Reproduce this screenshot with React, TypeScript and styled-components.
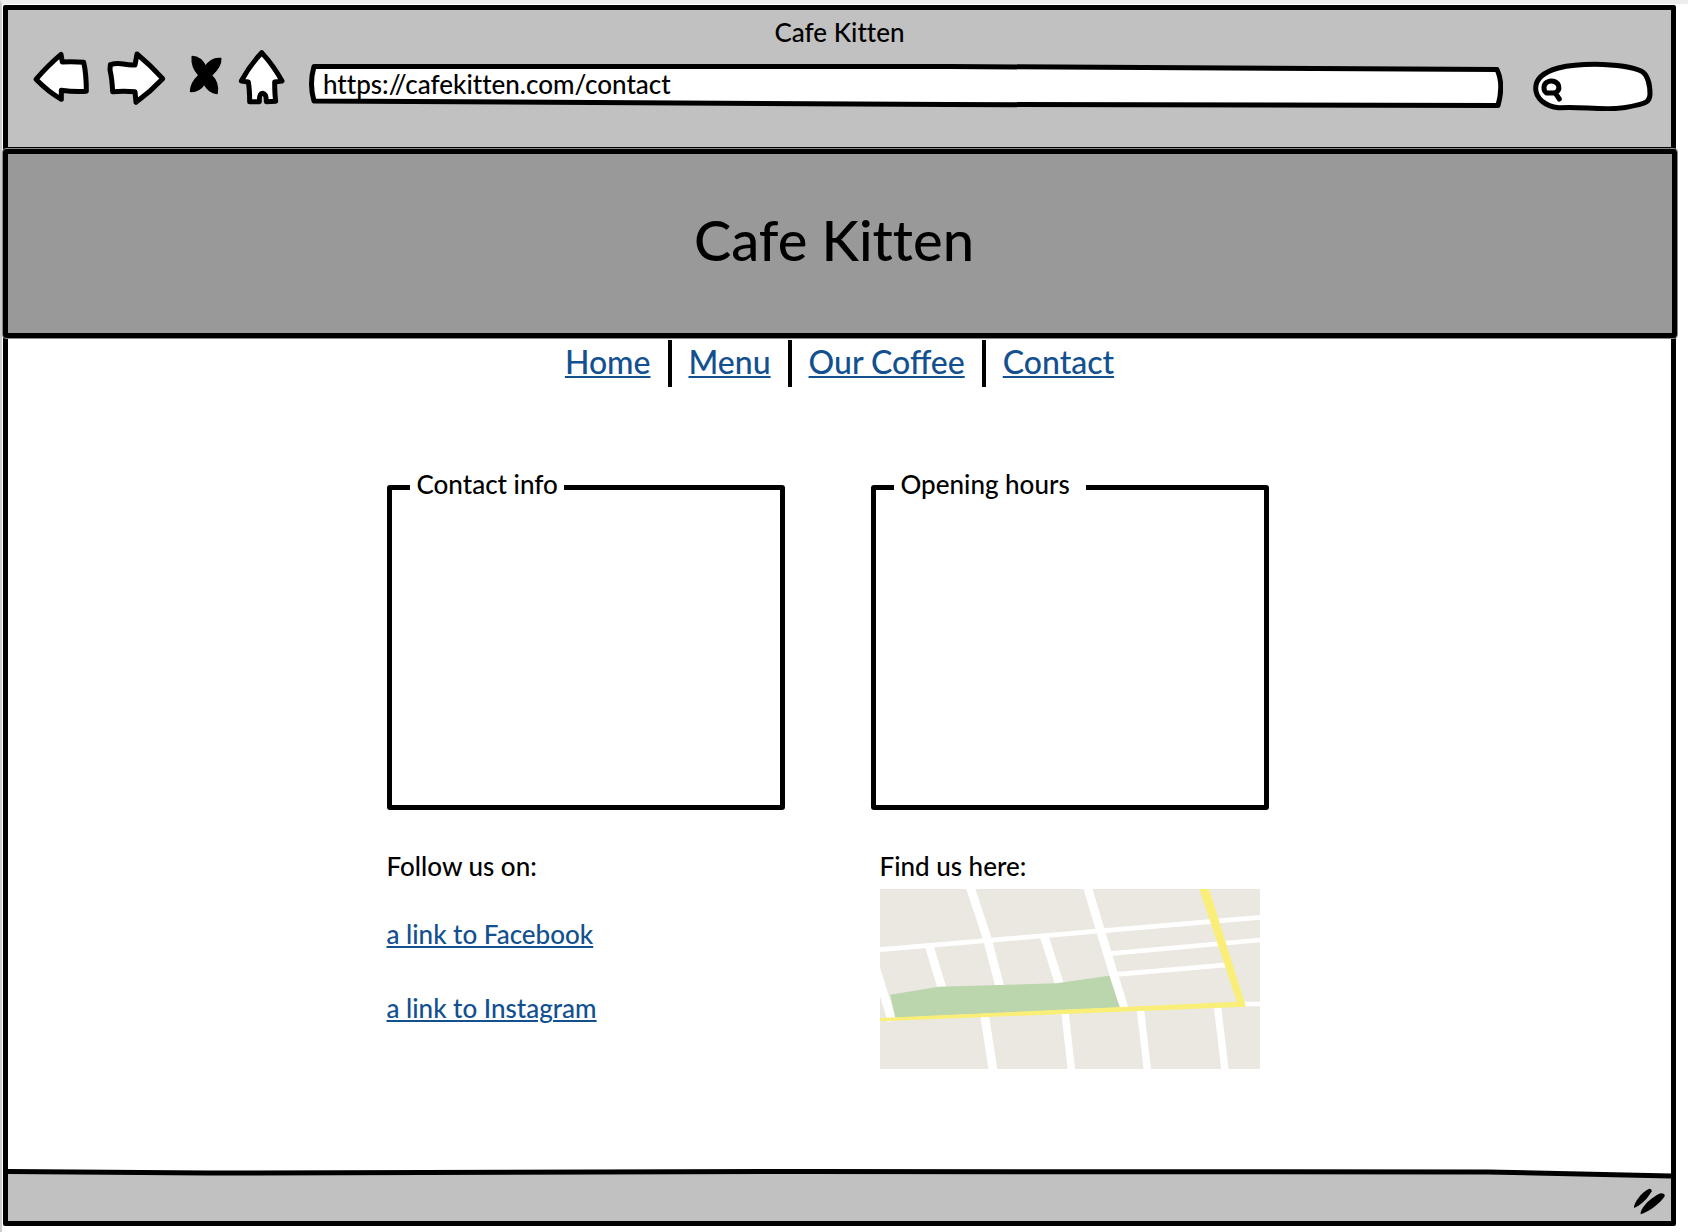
import React from "react";
import styled, { createGlobalStyle } from "styled-components";

const INK = "#000";
const CHROME = "#c1c1c1";
const LINK = "#12508f";

const GlobalStyle = createGlobalStyle`
  *, *::before, *::after { box-sizing: border-box; }
  body {
    margin: 0;
    background: #fff;
    color: ${INK};
    font-family: Lato, "Open Sans", sans-serif;
    font-size: 26px;
    font-weight: 500;
    line-height: 32px;
    font-variant-ligatures: none;
  }
`;

const Screen = styled.div`
  display: flex;
  min-height: 100vh;
  padding: 1px 12px 6px 1px;
  border-top: 4px solid #ececec;
  border-left: 2px solid #cdcdcd;
`;

const Frame = styled.div`
  flex: 1;
  min-width: 0;
  display: flex;
  flex-direction: column;
  border: 5px solid ${INK};
  border-radius: 2px;
`;

const Toolbar = styled.header`
  background: ${CHROME};
  padding: 6px 18px 37px 24px;
  border-bottom: 1px solid ${INK};
`;

const WindowTitle = styled.div`
  text-align: center;
  margin: 0 -18px 2px -24px;
`;

const Controls = styled.div`
  display: flex;
  align-items: center;
  gap: 16px;
  height: 60px;
`;

const IconButton = styled.button<{ $width: number }>`
  flex: none;
  width: ${(p) => p.$width}px;
  height: 56px;
  margin-bottom: 4px;
  padding: 0;
  border: 0;
  background: none;
  cursor: pointer;

  svg {
    display: block;
    width: 100%;
    height: 100%;
  }
`;

const Field = styled.label<{ $width?: number; $height: number; $lead: number }>`
  position: relative;
  flex: ${(p) => (p.$width ? "none" : "1")};
  width: ${(p) => (p.$width ? `${p.$width}px` : "auto")};
  min-width: 0;
  height: ${(p) => p.$height}px;
  margin-top: 12px;
  margin-left: ${(p) => p.$lead}px;
`;

const Outline = styled.svg`
  position: absolute;
  inset: 0;
  width: 100%;
  height: 100%;
`;

const TextInput = styled.input<{ $inset: number }>`
  position: relative;
  display: block;
  width: 100%;
  height: 100%;
  padding: 0 14px 4px ${(p) => p.$inset}px;
  border: 0;
  outline: 0;
  background: none;
  color: inherit;
  font: inherit;
  font-variant-ligatures: none;
`;

const Banner = styled.div`
  display: flex;
  align-items: center;
  justify-content: center;
  height: 189px;
  margin: 1px -6px 0 -5px;
  padding: 0 12px 8px 0;
  border: 5px solid ${INK};
  border-radius: 3px;
  outline: 1px solid #8a8a8a;
  background: #999;
`;

const BrandName = styled.h1`
  margin: 0;
  font-size: 56px;
  line-height: 68px;
  font-weight: 500;
`;

const Nav = styled.nav`
  display: flex;
  justify-content: center;
  margin-top: 2px;
  font-variant-ligatures: normal;
`;

const NavItem = styled.span`
  display: flex;
  height: 47px;
  padding: 2px 17px 0;
  font-size: 32px;
  line-height: 40px;

  & + & {
    border-left: 4px solid ${INK};
  }
`;

const TextLink = styled.a`
  color: ${LINK};
  text-decoration: underline;
  text-decoration-thickness: 2px;
  text-underline-offset: 2px;
`;

const Main = styled.main`
  flex: 1;
  display: grid;
  grid-template-columns: repeat(2, minmax(0, 398px));
  grid-template-rows: auto auto;
  align-content: start;
  justify-content: center;
  column-gap: 86px;
  row-gap: 40px;
  padding: 78px 24px 40px 0;
`;

const Panel = styled.fieldset`
  min-width: 0;
  height: 345px;
  margin: 0;
  padding: 0 18px;
  border: 5px solid ${INK};
  border-radius: 3px;
`;

const PanelTitle = styled.legend<{ $trail: number }>`
  padding: 0 ${(p) => p.$trail}px 6px 7px;
  line-height: 38px;
`;

const Section = styled.section<{ $inset?: boolean }>`
  padding-left: ${(p) => (p.$inset ? 9 : 0)}px;
`;

const SectionTitle = styled.h2`
  margin: 0 0 7px;
  font-size: 26px;
  line-height: 32px;
  font-weight: 500;
`;

const LinkList = styled.ul`
  display: grid;
  gap: 42px;
  margin: 36px 0 0;
  padding: 0;
  list-style: none;
`;

const MapPicture = styled.svg`
  display: block;
  width: 100%;
  max-width: 380px;
  height: auto;
`;

const StatusBar = styled.footer`
  position: relative;
  display: flex;
  align-items: center;
  justify-content: flex-end;
  height: 52px;
  padding: 12px 4px 0 0;
  background: ${CHROME};
`;

const StatusEdge = styled.svg`
  position: absolute;
  top: 0;
  left: 0;
  width: 100%;
  height: 10px;
`;

const Grip = styled.svg`
  width: 35px;
  height: 29px;
`;

const sketch = {
  fill: "#fff",
  stroke: INK,
  strokeWidth: 15,
  strokeLinejoin: "round" as const,
  strokeLinecap: "round" as const,
};

const BackIcon = () => (
  <svg viewBox="96 150 174 168" aria-hidden="true">
    <path {...sketch} d="M108 238Q140 200 183 163L187 186Q220 184 251 187Q259 220 259 274Q220 276 184 271L184 298Q145 276 108 238Z" />
  </svg>
);

const ForwardIcon = () => (
  <svg viewBox="318 150 186 168" aria-hidden="true">
    <path {...sketch} d="M331 194Q350 188 370 192T405 195L411 162Q452 196 488 236Q450 276 408 307L405 275Q370 272 338 275Q336 235 330 210Z" />
  </svg>
);

const StopIcon = () => (
  <svg viewBox="552 150 114 168" aria-hidden="true">
    <path
      d="M577 170C596 171 609 184 617 200C628 182 645 174 662 176C663 195 650 212 634 226C648 240 655 260 651 280C633 279 620 266 613 252C603 266 590 275 572 274C572 255 582 240 597 226C582 210 575 190 577 170Z"
      stroke={INK}
      strokeWidth="5"
      strokeLinejoin="round"
    />
  </svg>
);

const HomeIcon = () => (
  <svg viewBox="714 150 150 168" aria-hidden="true">
    <path {...sketch} d="M785 158Q820 196 846 243L824 246Q824 280 827 304L799 305Q799 281 788 280Q777 281 778 305L749 305Q749 270 745 246L724 243Q750 195 785 158Z" />
  </svg>
);

const AddressOutline = () => (
  <Outline viewBox="0 0 1194 44" preserveAspectRatio="none" aria-hidden="true">
    <path
      d="M5 2.5L640 2.5L1188 5.5Q1195 20 1189 41.500L640 40.500L5 37Q0 20 5 2.500Z"
      fill="#fff"
      stroke={INK}
      strokeWidth="5"
      strokeLinejoin="round"
      vectorEffect="non-scaling-stroke"
    />
  </Outline>
);

const SearchOutline = () => (
  <Outline viewBox="459 180 360 150" aria-hidden="true">
    <path {...sketch} d="M536 320C495 316 467 292 467 262C467 232 495 212 535 201C575 191 610 190 645 190C700 191 755 197 785 211C804 222 810 255 810 280C809 300 798 306 780 310C745 319 715 324 680 323C630 323 590 317 540 320Z" />
    <path {...sketch} d="M500 276C489 270 489 250 501 244C512 236 530 241 535 252C540 266 532 275 520 276ZM527 278L538 294" />
  </Outline>
);

const roads = { fill: "none", stroke: "#fff" };

const StreetMap = () => (
  <MapPicture viewBox="60 150 1140 540" role="img" aria-label="Street map">
    <rect x="60" y="150" width="1140" height="540" fill="#ebe8e1" />
    <g {...roads} strokeWidth="14">
      <path d="M60 332L1200 235" />
      <path d="M750 344L1200 303" />
      <path d="M770 406L1110 377" />
      <path d="M1140 495L1200 495" />
    </g>
    <g {...roads} strokeWidth="26">
      <path d="M326 130L382 300L420 445" />
      <path d="M678 130L794 515" />
      <path d="M208 322L246 448" />
      <path d="M552 290L600 440" />
      <path d="M48 390L96 545" />
      <path d="M374 530L400 700" />
    </g>
    <g {...roads} strokeWidth="22">
      <path d="M615 520L635 700" />
      <path d="M841 510L863 700" />
      <path d="M1072 500L1096 700" />
    </g>
    <path d="M91 467L235 443L590 433L748 410L780 506L106 536Z" fill="#bbd5ac" />
    <path d="M60 537L1131 488L1018 150L1047 150L1158 503L60 547Z" fill="#f9ef78" />
  </MapPicture>
);

const pages = ["Home", "Menu", "Our Coffee", "Contact"];

export default function App() {
  return (
    <>
      <GlobalStyle />
      <Screen>
        <Frame>
          <Toolbar>
            <WindowTitle>Cafe Kitten</WindowTitle>
            <Controls>
              <IconButton type="button" aria-label="Back" $width={58}><BackIcon /></IconButton>
              <IconButton type="button" aria-label="Forward" $width={62}><ForwardIcon /></IconButton>
              <IconButton type="button" aria-label="Stop" $width={38}><StopIcon /></IconButton>
              <IconButton type="button" aria-label="Home" $width={50}><HomeIcon /></IconButton>
              <Field $height={44} $lead={5}>
                <AddressOutline />
                <TextInput type="text" aria-label="Address" $inset={14} defaultValue="https://cafekitten.com/contact" />
              </Field>
              <Field $width={120} $height={50} $lead={14}>
                <SearchOutline />
                <TextInput type="search" aria-label="Search" $inset={30} />
              </Field>
            </Controls>
          </Toolbar>

          <Banner>
            <BrandName>Cafe Kitten</BrandName>
          </Banner>

          <Nav>
            {pages.map((page) => (
              <NavItem key={page}>
                <TextLink href="#">{page}</TextLink>
              </NavItem>
            ))}
          </Nav>

          <Main>
            <Panel>
              <PanelTitle $trail={6}>Contact info</PanelTitle>
            </Panel>
            <Panel>
              <PanelTitle $trail={16}>Opening hours</PanelTitle>
            </Panel>
            <Section>
              <SectionTitle>Follow us on:</SectionTitle>
              <LinkList>
                <li><TextLink href="#">a link to Facebook</TextLink></li>
                <li><TextLink href="#">a link to Instagram</TextLink></li>
              </LinkList>
            </Section>
            <Section $inset>
              <SectionTitle>Find us here:</SectionTitle>
              <StreetMap />
            </Section>
          </Main>

          <StatusBar>
            <StatusEdge viewBox="0 0 1663 10" preserveAspectRatio="none" aria-hidden="true">
              <path d="M0 0H1663V6L1480 3L800 2L200 4L0 2Z" fill="#fff" />
              <path
                d="M0 2.500L200 4L800 2.500L1480 3L1663 7"
                fill="none"
                stroke={INK}
                strokeWidth="5"
                vectorEffect="non-scaling-stroke"
              />
            </StatusEdge>
            <Grip viewBox="760 145 105 87" aria-hidden="true">
              <path d="M766 208C764 194 788 160 812 150Q820 150 819 158C810 176 786 202 766 208Z" />
              <path d="M786 227C783 210 816 176 846 164Q860 164 858 173C846 192 812 220 786 227Z" />
            </Grip>
          </StatusBar>
        </Frame>
      </Screen>
    </>
  );
}
